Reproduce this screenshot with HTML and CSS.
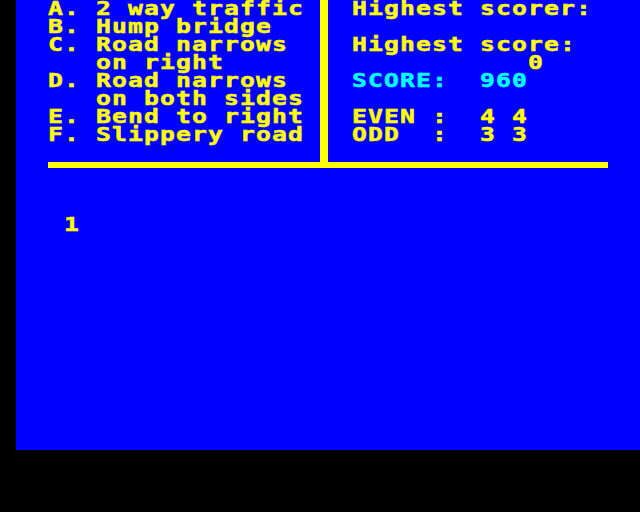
FILE: index.html
```html
<!DOCTYPE html>
<html>
<head>
<meta charset="utf-8">
<link rel="stylesheet" href="styles.css">
</head>
<body>
<div class="screen">
  <div class="top">
    <div class="col left">
      <div class="txt">A. 2 way traffic
B. Hump bridge
C. Road narrows
   on right
D. Road narrows
   on both sides
E. Bend to right
F. Slippery road</div>
    </div>
    <div class="vbar"></div>
    <div class="col right">
      <div class="txt">Highest scorer:

Highest score:
           0
<span class="cyan">SCORE:  960</span>

EVEN :  4 4
ODD  :  3 3</div>
    </div>
  </div>
  <div class="hbar"></div>
  <div class="count"><div class="txt">1</div></div>
</div>
</body>
</html>
```
FILE: styles.css
```css
html, body {
  margin: 0;
  padding: 0;
  background: #000;
}
.screen {
  margin-left: 16px;
  width: 624px;
  height: 450px;
  background: #0000ff;
  overflow: hidden;
}
.top {
  display: flex;
  height: 162px;
}
.col {
  box-sizing: border-box;
}
.left {
  width: 304px;
  padding-left: 32px;
}
.right {
  flex: 1;
  padding-left: 24px;
}
.vbar {
  width: 8px;
  height: 162px;
  background: #ffff00;
  flex: none;
}
.hbar {
  margin-left: 32px;
  width: 560px;
  height: 6px;
  background: #ffff00;
}
.txt {
  font-family: "DejaVu Sans Mono", monospace;
  font-weight: bold;
  font-size: 19px;
  line-height: 18px;
  letter-spacing: 0.87px;
  white-space: pre;
  color: #ffff00;
  -webkit-text-stroke: 0.5px currentColor;
  transform: scaleX(1.3);
  transform-origin: 0 0;
  margin-top: -1.5px;
}
.cyan {
  color: #00ffff;
}
.count {
  padding-left: 48px;
  margin-top: 48px;
}
```
